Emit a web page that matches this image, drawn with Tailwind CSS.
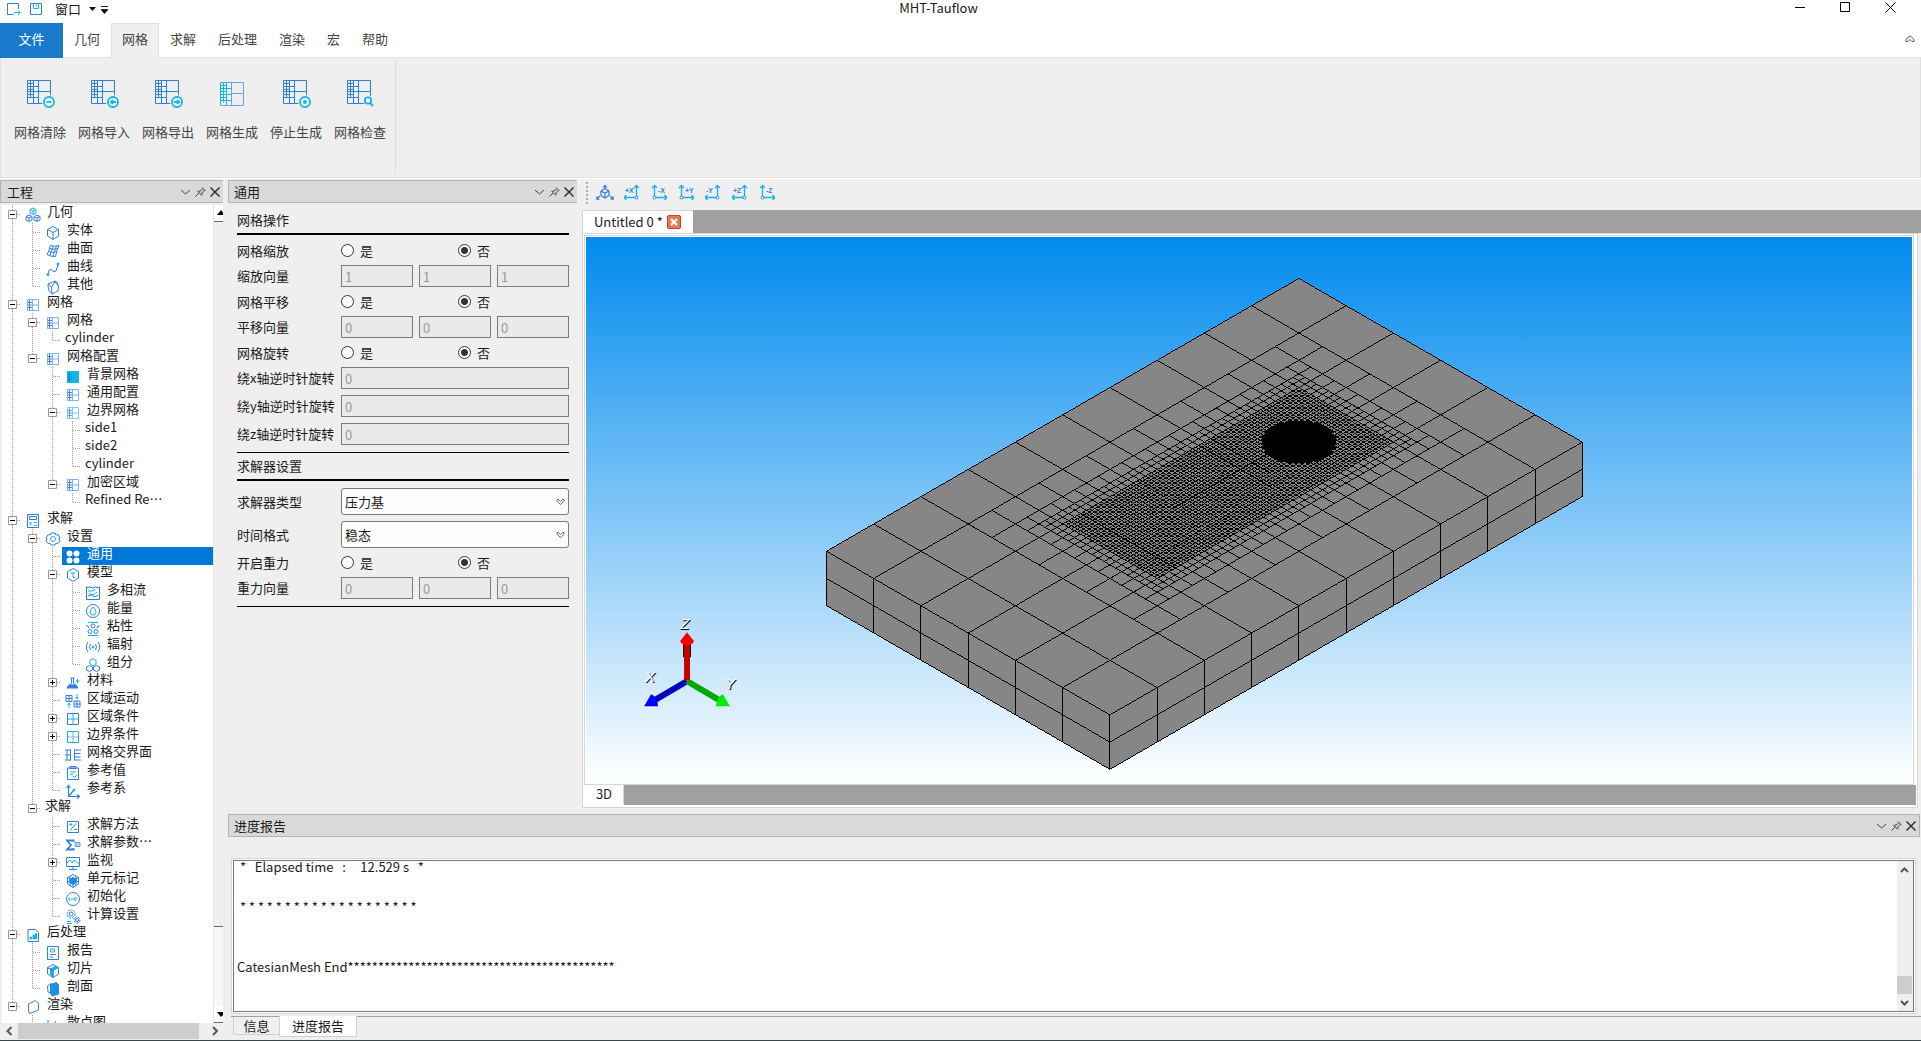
<!doctype html>
<html lang="zh-CN">
<head>
    <meta charset="utf-8">
    <meta name="viewport" content="width=device-width, initial-scale=1">
    <title>MHT-Tauflow</title>
    <script src="https://cdn.jsdelivr.net/npm/@tailwindcss/browser@4"></script>
</head>
<body class="flex h-screen flex-col overflow-hidden bg-[#efefef] font-['Noto_Sans_CJK_SC',sans-serif] text-[13px] leading-4 text-[#1a1a1a]">
    <!-- Barra de título -->
    <header class="flex h-[23px] shrink-0 items-start bg-white">
        <div class="flex h-[18px] flex-1 items-center pl-[5px]">
            <button class="size-4" aria-label="新建" data-icon="newfile"></button>
            <button class="ml-[7px] size-4" aria-label="保存" data-icon="save"></button>
            <button class="ml-[11px] flex items-center gap-[7px]">窗口
                <svg class="h-2 w-[9px]" viewBox="0 0 9 8"><path d="M1 2h7L4.500 6z" fill="#111"/></svg>
            </button>
            <svg class="ml-1 h-[9px] w-[7px]" viewBox="0 0 7 9"><path d="M0 1.500h7M0 4.500h7" stroke="#222"/><path d="M0 5h7L3.500 9z" fill="#111"/></svg>
        </div>
        <h1 class="mr-6 h-[18px] text-[13px]">MHT-Tauflow</h1>
        <div class="flex h-[15px] flex-1 items-center justify-end gap-[34px] pr-[25px]">
            <button aria-label="最小化"><svg class="size-[11px]" viewBox="0 0 11 11" stroke="#000" fill="none"><path d="M0 5.500h10"/></svg></button>
            <button aria-label="最大化"><svg class="size-[11px]" viewBox="0 0 11 11" stroke="#000" fill="none"><path d="M.5.5h9v9h-9z"/></svg></button>
            <button aria-label="关闭"><svg class="size-[11px]" viewBox="0 0 11 11" stroke="#000" fill="none"><path d="M.5.5l10 10M10.500.5l-10 10"/></svg></button>
        </div>
    </header>

    <!-- Pestañas del menú -->
    <nav class="flex h-[35px] shrink-0 items-stretch border-b border-[#e0e0e0] bg-white text-[#444]">
        <button class="-mb-px w-[63px] bg-[#1979ca] pb-[3px] text-white">文件</button>
        <button class="px-[11px] pb-0.5">几何</button>
        <button class="-mb-px border border-b-0 border-[#dedede] bg-[#efefef] px-[10px] pb-1">网格</button>
        <button class="px-[11px] pb-0.5">求解</button>
        <button class="px-[11px] pb-0.5">后处理</button>
        <button class="px-[11px] pb-0.5">渲染</button>
        <button class="px-[11px] pb-0.5">宏</button>
        <button class="px-[11px] pb-0.5">帮助</button>
        <button class="ml-auto mr-[6px] pb-0.5" aria-label="折叠"><svg class="h-2 w-[10px]" viewBox="0 0 10 8" fill="none" stroke="#555"><path d="M1 6.500L1 4.500L5 .8L9 4.500V6.500H7L5 4.500L3 6.500z"/></svg></button>
    </nav>

    <!-- Cinta de herramientas -->
    <section class="flex h-[120px] shrink-0 border-x border-b border-[#e0e0e0] pb-[3px] pl-[7px] pt-[2px] text-[#444] shadow-[0_1px_0_#fff]">
        <div class="flex border-r border-[#dcdcdc] pr-[3px] pt-[18px]">
            <button class="flex w-16 flex-col items-center gap-4"><span class="size-[30px]" data-icon="meshClear"></span>网格清除</button>
            <button class="flex w-16 flex-col items-center gap-4"><span class="size-[30px]" data-icon="meshIn"></span>网格导入</button>
            <button class="flex w-16 flex-col items-center gap-4"><span class="size-[30px]" data-icon="meshOut"></span>网格导出</button>
            <button class="flex w-16 flex-col items-center gap-4"><span class="size-[30px]" data-icon="meshGen"></span>网格生成</button>
            <button class="flex w-16 flex-col items-center gap-4"><span class="size-[30px]" data-icon="meshStop"></span>停止生成</button>
            <button class="flex w-16 flex-col items-center gap-4"><span class="size-[30px]" data-icon="meshCheck"></span>网格检查</button>
        </div>
    </section>

    <div class="mt-px flex min-h-0 flex-1 gap-[5px] border-b border-[#37444b]">
        <!-- Árbol del proyecto -->
        <aside class="flex w-[223px] shrink-0 flex-col pt-px">
            <div class="flex h-[23px] shrink-0 items-center border border-r-0 border-[#b4b4b4] bg-[#d9d9d9] pl-[6px]">
                <h2>工程</h2>
                <span class="ml-auto mr-px flex" data-icon="dock"></span>
            </div>
            <div class="ml-[2px] mt-[2px] flex min-h-0 flex-1 overflow-hidden bg-white">
                <ul id="tree" class="min-w-0 flex-1"></ul>
                <div class="flex w-[10px] shrink-0 flex-col border-l border-[#e4e4e4]">
                    <svg class="h-[17px] w-full border-b border-[#666]" viewBox="0 0 9 16"><path d="M3 10L7 5L9 7.500V10z" fill="#000"/></svg>
                    <div class="flex-1 bg-[#efefef]"></div>
                    <div class="h-20 border-t border-[#666] bg-[#f7f7f7]"></div>
                    <svg class="h-[17px] w-full border-b border-[#666]" viewBox="0 0 9 16"><path d="M3 6H9V9L7 11z" fill="#000"/></svg>
                </div>
            </div>
            <div class="mb-[1px] flex h-4 shrink-0 items-stretch">
                <svg class="w-[18px]" viewBox="0 0 18 16" fill="none" stroke="#555" stroke-width="2"><path d="M11.500 4L7.500 8L11.500 12"/></svg>
                <div class="w-[181px] bg-[#cdcdcd]"></div>
                <svg class="ml-auto w-[18px]" viewBox="0 0 18 16" fill="none" stroke="#555" stroke-width="2"><path d="M8 4L12 8L8 12"/></svg>
            </div>
        </aside>

        <div class="flex min-w-0 flex-1 flex-col">
            <div class="flex min-h-0 flex-1 gap-[5px]">
                <!-- Panel de ajustes generales -->
                <section class="w-[349px] shrink-0 pt-px">
                    <div class="flex h-[23px] items-center border border-r-0 border-[#b4b4b4] bg-[#d9d9d9] pl-[5px]">
                        <h2>通用</h2>
                        <span class="ml-auto mr-px flex" data-icon="dock"></span>
                    </div>
                    <form class="ml-[9px] mr-2">
                        <h3 class="flex h-8 items-center border-b-2 border-black pt-1">网格操作</h3>
                        <div class="mt-[7px] grid grid-cols-[104px_1fr] items-center gap-y-[6px]">
                            <span>网格缩放</span>
                            <div class="grid h-[17px] grid-cols-2 items-center gap-[6px]">
                                <label class="flex items-center gap-[6px]"><input type="radio" name="scale" class="size-[13px] appearance-none rounded-full border border-[#333] bg-white checked:bg-[radial-gradient(circle,#333_3px,#fff_4px)]">是</label>
                                <label class="flex items-center gap-[6px]"><input type="radio" name="scale" checked class="size-[13px] appearance-none rounded-full border border-[#333] bg-white checked:bg-[radial-gradient(circle,#333_3px,#fff_4px)]">否</label>
                            </div>
                            <span>缩放向量</span>
                            <div class="grid grid-cols-3 gap-[6px]">
                                <input disabled aria-label="缩放 X" value="1" class="h-[22px] min-w-0 border border-[#7a7a7a] bg-[#eaeaea] px-[3px] text-[#999]">
                                <input disabled aria-label="缩放 Y" value="1" class="h-[22px] min-w-0 border border-[#7a7a7a] bg-[#eaeaea] px-[3px] text-[#999]">
                                <input disabled aria-label="缩放 Z" value="1" class="h-[22px] min-w-0 border border-[#7a7a7a] bg-[#eaeaea] px-[3px] text-[#999]">
                            </div>
                            <span>网格平移</span>
                            <div class="grid h-[17px] grid-cols-2 items-center gap-[6px]">
                                <label class="flex items-center gap-[6px]"><input type="radio" name="move" class="size-[13px] appearance-none rounded-full border border-[#333] bg-white checked:bg-[radial-gradient(circle,#333_3px,#fff_4px)]">是</label>
                                <label class="flex items-center gap-[6px]"><input type="radio" name="move" checked class="size-[13px] appearance-none rounded-full border border-[#333] bg-white checked:bg-[radial-gradient(circle,#333_3px,#fff_4px)]">否</label>
                            </div>
                            <span>平移向量</span>
                            <div class="grid grid-cols-3 gap-[6px]">
                                <input disabled aria-label="平移 X" value="0" class="h-[22px] min-w-0 border border-[#7a7a7a] bg-[#eaeaea] px-[3px] text-[#999]">
                                <input disabled aria-label="平移 Y" value="0" class="h-[22px] min-w-0 border border-[#7a7a7a] bg-[#eaeaea] px-[3px] text-[#999]">
                                <input disabled aria-label="平移 Z" value="0" class="h-[22px] min-w-0 border border-[#7a7a7a] bg-[#eaeaea] px-[3px] text-[#999]">
                            </div>
                            <span>网格旋转</span>
                            <div class="grid h-[17px] grid-cols-2 items-center gap-[6px]">
                                <label class="flex items-center gap-[6px]"><input type="radio" name="rotate" class="size-[13px] appearance-none rounded-full border border-[#333] bg-white checked:bg-[radial-gradient(circle,#333_3px,#fff_4px)]">是</label>
                                <label class="flex items-center gap-[6px]"><input type="radio" name="rotate" checked class="size-[13px] appearance-none rounded-full border border-[#333] bg-white checked:bg-[radial-gradient(circle,#333_3px,#fff_4px)]">否</label>
                            </div>
                            <label for="rotX" class="whitespace-nowrap">绕x轴逆时针旋转</label>
                            <input id="rotX" disabled value="0" class="h-[22px] min-w-0 border border-[#7a7a7a] bg-[#eaeaea] px-[3px] text-[#999]">
                            <label for="rotY" class="whitespace-nowrap">绕y轴逆时针旋转</label>
                            <input id="rotY" disabled value="0" class="h-[22px] min-w-0 border border-[#7a7a7a] bg-[#eaeaea] px-[3px] text-[#999]">
                            <label for="rotZ" class="whitespace-nowrap">绕z轴逆时针旋转</label>
                            <input id="rotZ" disabled value="0" class="h-[22px] min-w-0 border border-[#7a7a7a] bg-[#eaeaea] px-[3px] text-[#999]">
                        </div>
                        <h3 class="mt-[7px] flex h-[29px] items-center border-b-2 border-t border-black">求解器设置</h3>
                        <div class="mt-[7px] grid grid-cols-[104px_1fr] items-center gap-y-[6px] border-b border-black pb-[7px]">
                            <label for="solver">求解器类型</label>
                            <div class="relative">
                                <select id="solver" class="block h-[27px] w-full appearance-none rounded-[3px] border border-[#7a7a7a] bg-[#fdfdfd] px-[3px]"><option>压力基</option></select>
                                <svg class="pointer-events-none absolute right-1 top-[10px] h-2 w-[9px]" viewBox="0 0 9 8" fill="none" stroke="#666"><path d="M1 1.500H2.500L4.500 3.500L6.500 1.500H8V3.200L4.500 6.500L1 3.200z"/></svg>
                            </div>
                            <label for="time">时间格式</label>
                            <div class="relative">
                                <select id="time" class="block h-[27px] w-full appearance-none rounded-[3px] border border-[#7a7a7a] bg-[#fdfdfd] px-[3px]"><option>稳态</option></select>
                                <svg class="pointer-events-none absolute right-1 top-[10px] h-2 w-[9px]" viewBox="0 0 9 8" fill="none" stroke="#666"><path d="M1 1.500H2.500L4.500 3.500L6.500 1.500H8V3.200L4.500 6.500L1 3.200z"/></svg>
                            </div>
                            <span>开启重力</span>
                            <div class="grid h-[17px] grid-cols-2 items-center gap-[6px]">
                                <label class="flex items-center gap-[6px]"><input type="radio" name="gravity" class="size-[13px] appearance-none rounded-full border border-[#333] bg-white checked:bg-[radial-gradient(circle,#333_3px,#fff_4px)]">是</label>
                                <label class="flex items-center gap-[6px]"><input type="radio" name="gravity" checked class="size-[13px] appearance-none rounded-full border border-[#333] bg-white checked:bg-[radial-gradient(circle,#333_3px,#fff_4px)]">否</label>
                            </div>
                            <span>重力向量</span>
                            <div class="grid grid-cols-3 gap-[6px]">
                                <input disabled aria-label="重力 X" value="0" class="h-[22px] min-w-0 border border-[#7a7a7a] bg-[#eaeaea] px-[3px] text-[#999]">
                                <input disabled aria-label="重力 Y" value="0" class="h-[22px] min-w-0 border border-[#7a7a7a] bg-[#eaeaea] px-[3px] text-[#999]">
                                <input disabled aria-label="重力 Z" value="0" class="h-[22px] min-w-0 border border-[#7a7a7a] bg-[#eaeaea] px-[3px] text-[#999]">
                            </div>
                        </div>
                    </form>
                </section>

                <!-- Vista 3D -->
                <main class="flex min-w-0 flex-1 flex-col">
                    <div class="flex h-[31px] shrink-0 items-center pb-1 pl-1">
                        <div class="mr-[3px] h-[22px] border-l-2 border-dotted border-[#aaa]"></div>
                        <button class="flex w-[27px] justify-center" aria-label="等轴测" data-icon="iso"></button>
                        <button class="flex w-[27px] justify-center" aria-label="+X" data-icon="px"></button>
                        <button class="flex w-[27px] justify-center" aria-label="-X" data-icon="mx"></button>
                        <button class="flex w-[27px] justify-center" aria-label="+Y" data-icon="py"></button>
                        <button class="flex w-[27px] justify-center" aria-label="-Y" data-icon="my"></button>
                        <button class="flex w-[27px] justify-center" aria-label="+Z" data-icon="pz"></button>
                        <button class="flex w-[27px] justify-center" aria-label="-Z" data-icon="mz"></button>
                    </div>
                    <div class="flex h-[23px] shrink-0 bg-[#a0a0a0]">
                        <div class="flex items-center gap-1 border-l border-t border-[#d6d6d6] bg-white pl-[11px] pr-3">Untitled 0 *
                            <button class="flex size-[14px] items-center justify-center rounded-[2px] border border-[#d23c28] bg-[#de7c5a]" aria-label="关闭"><svg class="size-2" viewBox="0 0 8 8"><path d="M1 1l6 6M7 1l-6 6" stroke="#fff" stroke-width="2.200"/></svg></button>
                        </div>
                    </div>
                    <div class="mr-[3px] flex min-h-0 flex-1 flex-col border border-[#d6d6d6] bg-white p-px">
                        <div class="mr-0.5 min-h-0 flex-1 border border-[#d6d6d6] bg-white p-px">
                            <svg id="scene" class="block h-full w-full bg-[linear-gradient(to_bottom,#008bee,#ffffff)]" viewBox="0 0 1326 547"></svg>
                        </div>
                        <div class="flex h-5 shrink-0 bg-[#a0a0a0]">
                            <button class="w-10 border-r border-[#d6d6d6] bg-white pb-0.5 pl-[1px]">3D</button>
                        </div>
                        <div class="h-px"></div>
                    </div>
                </main>
            </div>

            <!-- Informe de progreso -->
            <section class="mt-[6px] shrink-0">
                <div class="mr-px flex h-[23px] items-center border border-[#b4b4b4] bg-[#d9d9d9] pl-[5px]">
                    <h2>进度报告</h2>
                    <span class="ml-auto mr-px flex" data-icon="dock"></span>
                </div>
                <div class="ml-[3px] mr-[5px] mt-[21px] border border-[#d6d6d6] bg-white p-px">
                    <div class="flex h-[152px] border border-[#777]">
                        <div class="flex min-w-0 flex-1 flex-col justify-end overflow-hidden pb-[14px] pl-[3px] leading-5">
                            <pre class="font-['Noto_Sans_CJK_SC',sans-serif]"> *   Elapsed time   :     12.529 s   *

 * * * * * * * * * * * * * * * * * * * *


CatesianMesh End********************************************
 </pre>
                        </div>
                        <div class="flex w-4 flex-col bg-[#efefef]">
                            <svg class="h-[18px]" viewBox="0 0 16 18" fill="none" stroke="#555" stroke-width="2"><path d="M4 11L7.500 7.500L11 11"/></svg>
                            <div class="mt-auto h-[18px] w-[15px] bg-[#cdcdcd]"></div>
                            <svg class="h-[17px]" viewBox="0 0 16 17" fill="none" stroke="#555" stroke-width="2"><path d="M4 7L7.500 10.500L11 7"/></svg>
                        </div>
                    </div>
                </div>
                <div class="ml-[3px] mt-[2px] flex h-6 items-start border-t border-[#a0a0a0] pl-[2px]">
                    <button class="h-[18px] w-[46px] border-b border-l border-[#d0d0d0]">信息</button>
                    <button class="-mt-px h-[21px] w-[78px] border border-t-0 border-[#d0d0d0] bg-white">进度报告</button>
                </div>
            </section>
        </div>
    </div>

    <script>
        const B = '#2f7fe0';
        const C = '#10b5ea';

        function svg(w, h, body) {
            return `<svg width="${w}" height="${h}" viewBox="0 0 ${w} ${h}" fill="none" stroke="${B}">${body}</svg>`;
        }

        // Malla grande de la cinta
        const bigMesh = `<path d="M2.500 2.500h23v23h-23zM13.500 2.500v23M13.500 13.500h12M2.500 8.500h11M2.500 13.500h11M2.500 19.500h11M8.500 2.500v23"/><path d="M5.500 2.500v17M2.500 5.500h6M2.500 11.500h6M2.500 16.500h6" stroke-width="1"/>`;
        const badge = inner => `<circle cx="24" cy="24" r="7" fill="#efefef" stroke="none"/><circle cx="24" cy="24" r="5" fill="#fff" stroke="${C}" stroke-width="1.800"/><g stroke="${C}" stroke-width="1.800">${inner}</g>`;

        // Malla pequeña del árbol
        const smallMesh = (edge, fine) => `<path d="M2.500 2.500h11v11h-11zM7.500 2.500v11M7.500 8h6" stroke="${edge}"/><path d="M4.500 3v10M3 5.500h4M3 8h4M3 10.500h4" stroke="${fine}"/>`;
        const window4 = (outer, inner) => `<path d="M8 3v10M3 8h10" stroke="${inner}"/><path d="M2.500 2.500h11v11h-11z" stroke="${outer}"/>`;
        const cubeLines = 'M8 1.500L13.500 4.500V11L8 14.500L2.500 11V4.500zM2.500 4.500L8 7.500L13.500 4.500M8 7.500V14.500';

        // Flechas de orientación de la vista
        function axisIcon(text, right) {
            const x = right ? 12.5 : 3.5;
            const tip = right ? 'M12 13.500H0M2.500 11L0 13.500L2.500 16' : 'M4 13.500H16M13.500 11L16 13.500L13.500 16';
            return svg(16, 17, `<g stroke="${C}" stroke-width="1.300"><path d="M${x} 13V1.500M${x - 2.5} 4L${x} 1.500L${x + 2.5} 4"/><path d="${tip}"/></g><circle cx="${x}" cy="13.500" r="1.500" fill="#fff"/><text x="${right ? 1 : 7}" y="9" font-size="7" font-weight="bold" font-family="Liberation Sans" fill="${B}" stroke="none">${text}</text>`);
        }

        const icons = {
            newfile: svg(16, 16, `<path d="M13.500 8V2.500h-11v11h6"/><path d="M9 11.500h6M13 9.500l2 2l-2 2.500" stroke="${C}"/>`),
            save: svg(16, 16, `<path d="M2.500 2.500h11v11h-11z"/><path d="M5.500 2.500v5h5v-5M8.500 3.500v2" stroke="${C}"/>`),
            meshClear: svg(30, 30, bigMesh + badge('<path d="M21.500 24h5"/>')),
            meshIn: svg(30, 30, bigMesh + badge('<path d="M27 24h-5M24 21.800L21.800 24L24 26.200"/>')),
            meshOut: svg(30, 30, bigMesh + badge('<path d="M21 24h5M24 21.800L26.200 24L24 26.200"/>')),
            meshStop: svg(30, 30, bigMesh + badge('<circle cx="24" cy="24" r="1"/>')),
            meshCheck: svg(30, 30, bigMesh + `<circle cx="23" cy="22.500" r="5" fill="#efefef" stroke="none"/><circle cx="23" cy="22.500" r="3.200" stroke="${C}" stroke-width="1.800" fill="#fff"/><path d="M25 25l3 3" stroke="${C}" stroke-width="2"/>`),
            meshGen: svg(30, 30, `<g stroke="#6aa3ea"><path d="M3.500 4.500h23v23h-23zM14.500 4.500v23M14.500 15.500h12"/></g><path d="M3.500 4.500v23M6.500 4.500v20M9.500 4.500v23M3.500 7.500h6M3.500 10.500h11M3.500 13.500h6M3.500 16.500h11M3.500 19.500h6M3.500 22.500h11" stroke="${C}"/>`),
            dock: `<svg width="44" height="20" viewBox="0 0 44 20" fill="none" stroke="#444"><path d="M3 8l4.500 4L12 8"/><path d="M17.500 14.500L21 11M19.500 9l4.500 4.500M20 9.500L23 8.500L24.500 6.500M23.500 13L24.500 10L26.500 8.500M24 5.500l3.500 3.500"/><path d="M32.500 5.500l9 9M41.500 5.500l-9 9" stroke="#222" stroke-width="1.300"/></svg>`,
            iso: svg(20, 18, `<path d="M10 4.500L14 7V11.500L10 14L6 11.500V7zM6 7L10 9L14 7M10 9V14" stroke-width="1.200"/><path d="M10 4V1.500M5 12L2 14.500M15 12L18 14.500" stroke-width="1.300"/><path d="M7.500 3.500h5L10 .5zM1 12l.5 4l3.500-.5zM19 12l-.5 4l-3.500-.5z" fill="${B}" stroke="none"/>`),
            px: axisIcon('+X', true), mx: axisIcon('-X', false),
            py: axisIcon('+Y', false), my: axisIcon('-Y', true),
            pz: axisIcon('+Z', true), mz: axisIcon('-Z', false),
            // Iconos del árbol
            cubes: svg(16, 16, `<path d="M8 1l3 1.500v3.500L8 7.500L5 6V2.500zM5 2.500L8 4l3-1.500M8 4v3" stroke="${C}"/><path d="M4 8l3 1.500v3.500l-3 1.500l-3-1.500V9.500zM1 9.500L4 11l3-1.500M4 11v3M12 8l3 1.500v3.500l-3 1.500l-3-1.500V9.500zM9 9.500l3 1.500l3-1.500M12 11v3"/>`),
            cube: svg(16, 16, `<path d="${cubeLines}"/>`),
            surface: svg(16, 16, `<path d="M5.500 2.500Q9 4 14 2.500Q12 6 10.500 13.500Q6 14 2 11.500Q4 8 5.500 2.500zM8.500 3Q6 8 5 13M11.500 3Q9 8 8 13.500M4.500 5.500Q9 7 13 5.500M3.500 8.500Q8 10.500 12 8.500"/>`),
            curve: svg(16, 16, `<path d="M3 13Q3.500 8 6 8.500Q9.500 12 11 10Q12.500 6 13 3"/><circle cx="13" cy="3" r="1.500" fill="${C}" stroke="none"/><circle cx="3" cy="13.500" r="1.500" fill="${C}" stroke="none"/>`),
            other: svg(16, 16, `<path d="M3 5L8 3L11 2L13.500 7L13 12L7 15L3.500 11zM3 5L6.500 8L7 15M6.500 8L10 3M10 3L13.500 7"/>`),
            mesh: svg(16, 16, smallMesh('#7fb0ee', '#3b86e6')),
            meshFill: svg(16, 16, `<path d="M2 2h12v12H2z" fill="${C}" stroke="none"/>` + smallMesh('#10b5ea', '#0d8fd8')),
            meshCyan: svg(16, 16, smallMesh('#74cdf4', '#5a9cea')),
            calc: svg(16, 16, `<path d="M2.500 1.500h11v13h-11zM4.500 3.500h7v3h-7z"/><path d="M4.500 9l2 3M6.500 9l-2 3M9 9.500h3M9 12.500h3" stroke="${C}"/>`),
            gear: svg(16, 16, `<path d="M6 2h4l.8 2l2.200-.3l2 3.300l-1.200 1l1.200 2l-2 2.500l-2.200-.3L10 14H6l-.8-1.800l-2.200.3L1 10l1.200-2L1 7l2-3.300l2.200.3z"/><circle cx="8" cy="8" r="2.500" stroke="${C}"/>`),
            clover: svg(16, 16, `<g fill="#fff" stroke="none"><circle cx="4.500" cy="4.500" r="3"/><circle cx="11.500" cy="4.500" r="3"/><circle cx="4.500" cy="11.500" r="3"/><circle cx="11.500" cy="11.500" r="3"/></g>`),
            hex: svg(16, 16, `<path d="M8 1.500L13.500 4.500V11L8 14.500L2.500 11V4.500z"/><path d="M5.500 6h5M8 6v4.500h2" stroke="${C}"/>`),
            phases: svg(16, 16, `<path d="M1.500 1.500v13h13v-13M1.500 3l3-1l3 1l3-1l4 1M3 11q3-2 5 0t5-1"/><path d="M3 6h5l2-2M4 8.500l4 1.500l4-3" stroke="${C}"/>`),
            energy: svg(16, 16, `<circle cx="8" cy="8" r="6.500"/><path d="M8 4Q11.500 7.500 11 9.500Q10 12 8 12Q5.500 12 5 9.500Q5 7 8 4z" stroke="${C}"/>`),
            viscous: svg(16, 16, `<path d="M3 1.500h10M3 14.500h10" stroke="${C}"/><circle cx="8" cy="5" r="2"/><circle cx="5" cy="10.500" r="2"/><circle cx="11" cy="10.500" r="2"/><path d="M1 5h2l1 2M15 5h-2l-1 2"/>`),
            radiation: svg(16, 16, `<circle cx="8" cy="8" r="1" fill="${C}" stroke="${C}"/><path d="M5.500 5Q3.500 8 5.500 11M10.500 5Q12.500 8 10.500 11M3 3Q-.5 8 3 13M13 3Q16.500 8 13 13"/>`),
            species: svg(16, 16, `<path d="M8 1.500l3 2v3.500L8 9L5 7V3.500z" stroke="${C}"/><path d="M4.500 8.500L7.500 10v3l-3 1.500l-3-1.500v-3zM11.500 8.500l3 1.500v3l-3 1.500l-3-1.500v-3z"/>`),
            material: svg(16, 16, `<path d="M5.500 3h4M6.500 3v5L3.500 12h8L8.500 8V3"/><path d="M4 10h7l2 3H2z" fill="${B}"/><path d="M10.500 6h4M12.500 4v4" stroke="${C}"/>`),
            motion: svg(16, 16, `<path d="M1 2.500h6v6H1zM4 2.500v6M1 5.500h6M9 8h6v6H9zM12 8v6M9 11h6"/><path d="M12 1v5M10.500 4l1.500 2l1.500-2M4 15v-5M2.500 12L4 10l1.500 2" stroke="${C}"/>`),
            zone: svg(16, 16, window4(B, C)),
            boundary: svg(16, 16, window4(C, '#7fb0ee')),
            interface: svg(16, 16, `<path d="M0 3h6M0 8h6M0 13h6M2 3v10M5.500 2.500v11M9.500 2.500v11M9.500 3H16M9.500 6.500h6M9.500 10h6M9.500 13H16"/>`),
            note: svg(16, 16, `<path d="M2.500 3h11v11.500h-11zM5 1.500h6v2H5z"/><path d="M5 7h6M5 9.500h3M8 11l1.500 1.500l2.500-2.500" stroke="${C}"/>`),
            axes: svg(16, 16, `<path d="M3.500 3v10.500H14M3.500 13.500l5-6M1.500 5l2-2.500l2 2.500M12 11.500l2.500 2l-2.500 2" stroke-width="1.200"/><circle cx="9" cy="7" r="1" fill="${C}" stroke="${C}"/>`),
            method: svg(16, 16, `<path d="M2.500 2.500h11v11h-11zM5 11.500l6-7"/><path d="M4.500 5.500h3M6 4v3M9 10.500h3" stroke="${C}"/>`),
            sigma: svg(16, 16, `<path d="M8.500 5V3.500H2L6 8L2 12.500h6.500V11" stroke-width="1.800"/><path d="M10 5.500h5v4h-5zM10 5.500l5 4M15 5.500l-5 4" stroke="#5ea2ee"/>`),
            monitor: svg(16, 16, `<path d="M1.500 2.500h13v9h-13zM8 11.500v3M4 14.500h8"/><path d="M2 8l3-3l2 3l2.500-3l4 4" stroke="${C}"/>`),
            cells: svg(16, 16, `<path d="${cubeLines}M2.500 8l5.500 3l5.500-3M5 3v10M11 3v10"/><path d="M5 6l3-1.500L11 6v4l-3 1.500L5 10z" fill="#0c8fe6"/>`),
            init: svg(16, 16, `<circle cx="8" cy="8" r="6.500"/><text x="3" y="10" font-size="6" font-weight="bold" font-family="Liberation Sans" fill="${C}" stroke="none">t=0</text>`),
            gears: svg(16, 16, `<circle cx="6" cy="5" r="4" stroke-dasharray="2 1"/><circle cx="6" cy="5" r="2"/><circle cx="12" cy="11" r="3" stroke-dasharray="2 1"/><circle cx="12" cy="11" r="1.500"/><path d="M2 12.500h4M2 14.500h5" stroke="${C}"/>`),
            chart: svg(16, 16, `<path d="M3 2.500h7.500l3 3v9H3z"/><path d="M5 12v-2h1.500v2zM8 12V8h1.500v4zM10.500 12V6.500h1V12z" stroke="${C}" fill="${C}"/>`),
            report: svg(16, 16, `<path d="M2.500 1.500h11v13h-11z"/><path d="M5.500 4h4v3h-4z" stroke="${C}"/><path d="M5 9.500h6M5 12h3"/>`),
            slice: svg(16, 16, `<path d="${cubeLines}"/><path d="M5 5.500L11 2.500L13 4.500L8 7.500V14L5 12z" fill="${C}" stroke="none"/><path d="M8 7.500V14.500M2.500 4.500L8 7.500"/>`),
            section: svg(16, 16, `<path d="M2.500 5L6 2.500V12L3 11z"/><path d="M5.500 3.500L11.500 1.500L13.500 4V13L7 15L5.500 12z" fill="#1098e8"/>`),
            render: svg(16, 16, `<path d="M3.500 5L10.500 1.500L13.500 4.500V11L10 12.500L4.500 14.500L3.500 12z"/>`),
            scatter: svg(16, 16, `<path d="M3 3v11h11"/><path d="M6 8h1M10 5h1M9 10h1" stroke="${C}" stroke-width="2"/>`)
        };

        document.querySelectorAll('[data-icon]').forEach(el => {
            el.innerHTML = icons[el.dataset.icon];
        });

        // [nivel, icono, texto, estado]
        const rows = [
            [0, 'cubes', '几何', '-'], [1, 'cube', '实体'], [1, 'surface', '曲面'], [1, 'curve', '曲线'], [1, 'other', '其他'],
            [0, 'mesh', '网格', '-'], [1, 'mesh', '网格', '-'], [2, '', 'cylinder'],
            [1, 'mesh', '网格配置', '-'], [2, 'meshFill', '背景网格'], [2, 'mesh', '通用配置'], [2, 'meshCyan', '边界网格', '-'],
            [3, '', 'side1'], [3, '', 'side2'], [3, '', 'cylinder'], [2, 'mesh', '加密区域', '-'], [3, '', 'Refined Re…'],
            [0, 'calc', '求解', '-'], [1, 'gear', '设置', '-'], [2, 'clover', '通用', 'selected'], [2, 'hex', '模型', '-'],
            [3, 'phases', '多相流'], [3, 'energy', '能量'], [3, 'viscous', '粘性'], [3, 'radiation', '辐射'], [3, 'species', '组分'],
            [2, 'material', '材料', '+'], [2, 'motion', '区域运动'], [2, 'zone', '区域条件', '+'], [2, 'boundary', '边界条件', '+'],
            [2, 'interface', '网格交界面'], [2, 'note', '参考值'], [2, 'axes', '参考系'],
            [1, '', '求解', '-'], [2, 'method', '求解方法'], [2, 'sigma', '求解参数…'], [2, 'monitor', '监视', '+'],
            [2, 'cells', '单元标记'], [2, 'init', '初始化'], [2, 'gears', '计算设置'],
            [0, 'chart', '后处理', '-'], [1, 'report', '报告'], [1, 'slice', '切片'], [1, 'section', '剖面'],
            [0, 'render', '渲染', '-'], [1, 'scatter', '散点图']
        ];

        // ¿Hay otro hermano más abajo en ese nivel?
        function continues(index, level) {
            for (let i = index + 1; i < rows.length; i++) {
                if (rows[i][0] < level) return false;
                if (rows[i][0] === level) return true;
            }
            return false;
        }

        function guide(index, level) {
            const [own, , , state] = rows[index];
            const more = continues(index, level);
            let d = '';
            if (level < own) {
                if (more) d = 'M10.500 0V18';
            } else {
                d = `M10.500 0V${more ? 18 : 9}M11 9.500H18`;
            }
            let box = '';
            if (level === own && (state === '-' || state === '+')) {
                box = `<path d="M6.500 5.500h8v8h-8z" fill="#fff" stroke="#999"/><path d="M8 9.500h5${state === '+' ? 'M10.500 7v5' : ''}" stroke="#000"/>`;
            }
            return `<svg width="20" height="18" viewBox="0 0 20 18" fill="none" class="shrink-0"><path d="${d}" stroke="#999" stroke-dasharray="1 1"/>${box}</svg>`;
        }

        document.getElementById('tree').innerHTML = rows.map(([level, icon, text, state], i) => {
            let guides = '';
            for (let k = 0; k <= level; k++) guides += guide(i, k);
            const iconCell = icon ? `<span class="flex w-[22px] shrink-0 justify-center pt-px">${icons[icon]}</span>` : '';
            const body = state === 'selected' ? 'flex flex-1 h-[18px] items-center bg-[#0078d7] text-white' : 'flex flex-1 h-[18px] items-center';
            return `<li class="flex h-[18px] whitespace-nowrap">${guides}<div class="${body}">${iconCell}<span class="ml-[3px] pb-1.5 leading-3">${text}</span></div></li>`;
        }).join('');

        // Escena: placa de 10 x 6 celdas en proyección isométrica
        const DX = 47.33, DY = 27.33, DEPTH = 54.5;
        const pt = (a, b, z = 0) => `${(713 + DX * (b - a)).toFixed(2)} ${(41.5 + DY * (a + b) + z).toFixed(2)}`;
        const seg = (p, q) => `M${p}L${q}`;

        function grid(a0, a1, b0, b1, step) {
            let d = '';
            for (let a = a0; a <= a1 + 1e-6; a += step) d += seg(pt(a, b0), pt(a, b1));
            for (let b = b0; b <= b1 + 1e-6; b += step) d += seg(pt(a0, b), pt(a1, b));
            return d;
        }

        let lines = grid(0, 10, 0, 6, 1) + grid(1, 8, 1, 5, 0.5) + grid(1.5, 7.5, 1.5, 4.5, 0.25)
            + grid(1.75, 7.25, 1.75, 4.25, 0.125) + grid(2, 7, 2, 4, 0.0625);
        for (let b = 0; b <= 6; b++) lines += seg(pt(10, b), pt(10, b, DEPTH));
        for (let a = 0; a < 10; a++) lines += seg(pt(a, 6), pt(a, 6, DEPTH));
        [DEPTH / 2, DEPTH].forEach(z => {
            lines += `M${pt(10, 0, z)}L${pt(10, 6, z)}L${pt(0, 6, z)}`;
        });

        // Celdas finas alrededor del cilindro
        let hole = '';
        const s = 0.0625;
        for (let a = 2; a < 4; a += s) {
            for (let b = 2; b < 4; b += s) {
                if (Math.hypot(a + s / 2 - 3, b + s / 2 - 3) < 0.56) {
                    hole += `M${pt(a, b)}L${pt(a + s, b)}L${pt(a + s, b + s)}L${pt(a, b + s)}z`;
                }
            }
        }

        const axisLabel = (x, y, t) => `<text x="${x + 1}" y="${y + 1}" fill="#000">${t}</text><text x="${x}" y="${y}" fill="#fff">${t}</text>`;
        document.getElementById('scene').innerHTML = `
            <g shape-rendering="crispEdges">
                <path d="M${pt(0, 0)}L${pt(0, 6)}L${pt(0, 6, DEPTH)}L${pt(10, 6, DEPTH)}L${pt(10, 0, DEPTH)}L${pt(10, 0)}z" fill="#868686"/>
                <path d="${lines}" fill="none" stroke="#000"/>
                <path d="${hole}" fill="#000" stroke="#000"/>
            </g>
            <path d="M96 408h8v13h-8z" fill="#111"/>
            <path d="M100 445L66 465" stroke="#0000c0" stroke-width="6"/>
            <path d="M100 445L134 465" stroke="#00a800" stroke-width="6"/>
            <path d="M100 444V405" stroke="#c80000" stroke-width="6"/>
            <path d="M100 396L107 405Q105 409 100 409T93 405z" fill="#f00"/>
            <path d="M57 470L64 458Q70 460 71 470z" fill="#00f"/>
            <path d="M143 470L136 458Q130 460 129 470z" fill="#0e0"/>
            <g font-family="Liberation Sans" font-style="italic" font-size="15">
                ${axisLabel(93, 393, 'Z')}${axisLabel(58, 446, 'X')}${axisLabel(138, 453, 'Y')}
            </g>`;
    </script>
</body>
</html>
